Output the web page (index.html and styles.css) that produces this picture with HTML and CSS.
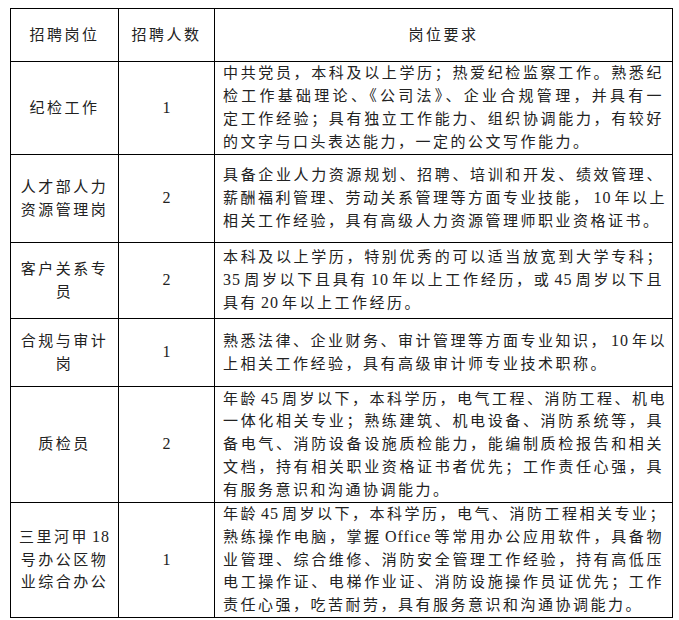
FILE: index.html
```html
<!DOCTYPE html>
<html lang="zh-CN">
<head>
<meta charset="utf-8">
<title>招聘岗位</title>
<link rel="stylesheet" href="styles.css">
</head>
<body>
<table class="jobs">
  <colgroup>
    <col class="c1">
    <col class="c2">
    <col class="c3">
  </colgroup>
  <tr class="h">
    <td class="pos">招聘岗位</td>
    <td class="num">招聘人数</td>
    <td class="head3">岗位要求</td>
  </tr>
  <tr class="r1">
    <td class="pos">纪检工作</td>
    <td class="num"><span class="d">1</span></td>
    <td class="req">
      <div class="ln">中共党员，本科及以上学历；热爱纪检监察工作。熟悉纪</div>
      <div class="ln">检工作基础理论、《公司法》、企业合规管理，并具有一</div>
      <div class="ln">定工作经验；具有独立工作能力、组织协调能力，有较好</div>
      <div class="ln">的文字与口头表达能力，一定的公文写作能力。</div>
    </td>
  </tr>
  <tr class="r2">
    <td class="pos">人才部人力<br>资源管理岗</td>
    <td class="num"><span class="d">2</span></td>
    <td class="req">
      <div class="ln">具备企业人力资源规划、招聘、培训和开发、绩效管理、</div>
      <div class="ln">薪酬福利管理、劳动关系管理等方面专业技能，<span class="n">10</span>年以上</div>
      <div class="ln">相关工作经验，具有高级人力资源管理师职业资格证书。</div>
    </td>
  </tr>
  <tr class="r3">
    <td class="pos">客户关系专<br>员</td>
    <td class="num"><span class="d">2</span></td>
    <td class="req">
      <div class="ln">本科及以上学历，特别优秀的可以适当放宽到大学专科；</div>
      <div class="ln"><span class="n first">35</span>周岁以下且具有<span class="n">10</span>年以上工作经历，或<span class="n">45</span>周岁以下且</div>
      <div class="ln">具有<span class="n">20</span>年以上工作经历。</div>
    </td>
  </tr>
  <tr class="r4">
    <td class="pos">合规与审计<br>岗</td>
    <td class="num"><span class="d">1</span></td>
    <td class="req">
      <div class="ln">熟悉法律、企业财务、审计管理等方面专业知识，<span class="n">10</span>年以</div>
      <div class="ln">上相关工作经验，具有高级审计师专业技术职称。</div>
    </td>
  </tr>
  <tr class="r5">
    <td class="pos">质检员</td>
    <td class="num"><span class="d">2</span></td>
    <td class="req">
      <div class="ln">年龄<span class="n">45</span>周岁以下，本科学历，电气工程、消防工程、机电</div>
      <div class="ln">一体化相关专业；熟练建筑、机电设备、消防系统等，具</div>
      <div class="ln">备电气、消防设备设施质检能力，能编制质检报告和相关</div>
      <div class="ln">文档，持有相关职业资格证书者优先；工作责任心强，具</div>
      <div class="ln">有服务意识和沟通协调能力。</div>
    </td>
  </tr>
  <tr class="r6">
    <td class="pos">三里河甲<span class="n">18</span><br>号办公区物<br>业综合办公</td>
    <td class="num"><span class="d">1</span></td>
    <td class="req">
      <div class="ln">年龄<span class="n">45</span>周岁以下，本科学历，电气、消防工程相关专业；</div>
      <div class="ln">熟练操作电脑，掌握<span class="n">Office</span>等常用办公应用软件，具备物</div>
      <div class="ln">业管理、综合维修、消防安全管理工作经验，持有高低压</div>
      <div class="ln">电工操作证、电梯作业证、消防设施操作员证优先；工作</div>
      <div class="ln">责任心强，吃苦耐劳，具有服务意识和沟通协调能力。</div>
    </td>
  </tr>
</table>
</body>
</html>
```

FILE: styles.css
```css
html, body {
  margin: 0;
  padding: 0;
  background: #ffffff;
}

body {
  padding: 8px 0 0 10px;
  font-family: "Liberation Serif", "Noto Sans CJK SC", serif;
  font-size: 15px;
  color: #222222;
}

.jobs {
  border-collapse: collapse;
  table-layout: fixed;
  width: 662px;
  border: 1px solid #000000;
}

.jobs .c1 { width: 108px; }
.jobs .c2 { width: 96px; }
.jobs .c3 { width: 458px; }

.jobs td {
  border: 1px solid #000000;
  padding: 0 8px;
  vertical-align: middle;
  line-height: 22.8px;
  letter-spacing: 2.5px;
}

.h { height: 53px; }
.r1 { height: 93px; }
.r2 { height: 88px; }
.r3 { height: 76px; }
.r4 { height: 68px; }
.r5 { height: 116px; }
.r6 { height: 114px; }

.pos,
.num,
.head3 {
  text-align: center;
  white-space: nowrap;
}

.pos {
  padding-left: 6px;
  padding-right: 4px;
}

.d {
  font-size: 16px;
  letter-spacing: 0;
}

.req .ln {
  white-space: nowrap;
  text-align: justify;
  text-align-last: justify;
}

.req .ln:last-child {
  text-align-last: left;
}

.n {
  font-size: 16px;
  letter-spacing: 1px;
  margin: 0 3px 0 3px;
}

.n.first {
  margin-left: 0;
}
```
